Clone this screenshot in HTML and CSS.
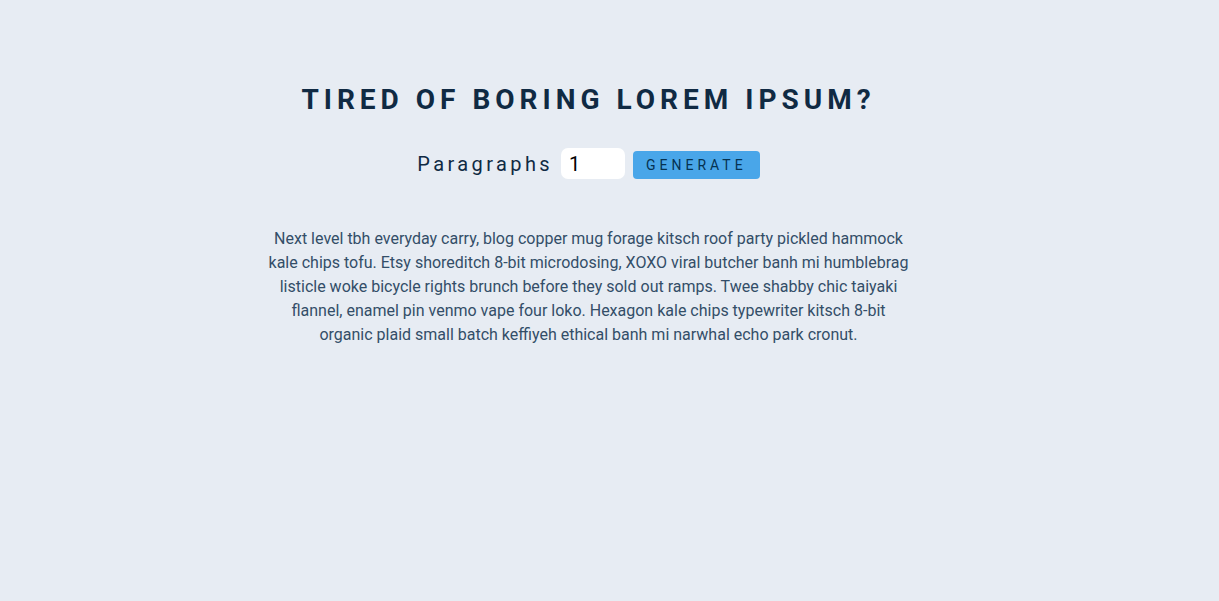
FILE: index.html
```html
<!DOCTYPE html>
<html lang="en">
<head>
<meta charset="utf-8">
<title>Lorem Ipsum Generator</title>
<link rel="stylesheet" href="styles.css">
</head>
<body>
<section class="section-center">
  <h3 class="title">tired of boring lorem ipsum?</h3>
  <form class="lorem-form">
    <label for="amount" class="label">paragraphs</label>
    <input type="number" name="amount" id="amount" class="amount" value="1">
    <button type="submit" class="btn">generate</button>
  </form>
  <article class="lorem-text">
    <p class="result">Next level tbh everyday carry, blog copper mug forage kitsch roof party pickled hammock kale chips tofu. Etsy shoreditch 8-bit microdosing, XOXO viral butcher banh mi humblebrag listicle woke bicycle rights brunch before they sold out ramps. Twee shabby chic taiyaki flannel, enamel pin venmo vape four loko. Hexagon kale chips typewriter kitsch 8-bit organic plaid small batch keffiyeh ethical banh mi narwhal echo park cronut.</p>
  </article>
</section>
</body>
</html>
```
FILE: styles.css
```css
* {
  margin: 0;
  padding: 0;
  box-sizing: border-box;
}

html {
  background: #e7ecf3;
}

body {
  font-family: Roboto, "Liberation Sans", sans-serif;
  color: #102a43;
  line-height: 1.5;
  font-size: 16px;
  padding-right: 42px;
}

.section-center {
  width: 90vw;
  max-width: 640px;
  margin: 0 auto;
  padding-top: 82px;
  text-align: center;
}

.title {
  font-size: 28px;
  line-height: 35px;
  font-weight: 700;
  letter-spacing: 5px;
  text-transform: uppercase;
  color: #102a43;
}

.lorem-form {
  display: flex;
  justify-content: center;
  align-items: center;
  margin-top: 31px;
  margin-bottom: 48px;
  text-transform: capitalize;
}

.label {
  font-size: 20px;
  line-height: 24px;
  letter-spacing: 3.4px;
  color: #102a43;
}

.amount {
  width: 64px;
  height: 31px;
  padding: 4px 8px;
  margin: 0 8px;
  border: none;
  border-radius: 7px;
  background: #fff;
  font-family: Roboto, "Liberation Sans", sans-serif;
  font-size: 20px;
  color: #000;
  letter-spacing: 0;
  outline: none;
}

.btn {
  align-self: flex-end;
  text-transform: uppercase;
  background: #49a6e9;
  color: #063251;
  padding: 0 13px;
  height: 28px;
  letter-spacing: 4px;
  font-family: Roboto, "Liberation Sans", sans-serif;
  font-size: 14px;
  font-weight: 400;
  border: none;
  border-radius: 4px;
  cursor: pointer;
}

.result {
  color: #334e68;
  line-height: 24px;
}
```
